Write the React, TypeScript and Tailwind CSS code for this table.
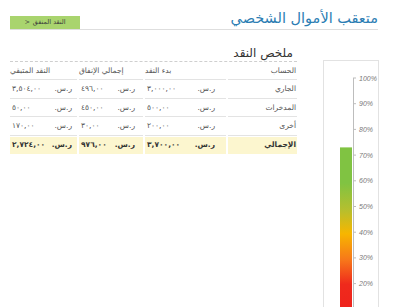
const rows = [
  { name: "الجاري", start: "٣,٠٠٠,٠٠", spent: "٤٩٦,٠٠", left: "٣,٥٠٤,٠٠" },
  { name: "المدخرات", start: "٥٠٠,٠٠", spent: "٤٥٠,٠٠", left: "٥٠,٠٠" },
  { name: "أخرى", start: "٢٠٠,٠٠", spent: "٣٠,٠٠", left: "١٧٠,٠٠" },
];

const total = { name: "الإجمالي", start: "٣,٧٠٠,٠٠", spent: "٩٧٦,٠٠", left: "٢,٧٢٤,٠٠" };

const ticks = [100, 90, 80, 70, 60, 50, 40, 30, 20];

function Money({ value, pad, bold }: { value: string; pad: string; bold?: boolean }) {
  return (
    <div className={`flex items-center justify-between pl-[2px] ${pad} ${bold ? "font-bold text-[#333]" : ""}`}>
      <span>{value}</span>
      <span dir="rtl">ر.س.</span>
    </div>
  );
}

function Gauge() {
  const zero = 274;
  const step = 25.7;
  const barTop = zero - 7.3 * step;
  return (
    <svg width="56" height="260" viewBox="0 0 56 260">
      <defs>
        <linearGradient id="fill" x1="0" y1={barTop} x2="0" y2={zero} gradientUnits="userSpaceOnUse">
          <stop offset="0" stopColor="#80c342" />
          <stop offset="0.19" stopColor="#80c342" />
          <stop offset="0.33" stopColor="#b4bf2f" />
          <stop offset="0.46" stopColor="#f7b600" />
          <stop offset="0.6" stopColor="#f7771a" />
          <stop offset="0.73" stopColor="#ef2a1c" />
          <stop offset="1" stopColor="#ee1c1c" />
        </linearGradient>
      </defs>
      <rect x="16" y={barTop} width="12" height={zero - barTop} fill="url(#fill)" />
      <line x1="29.5" y1="17" x2="29.5" y2="260" stroke="#bdbdbd" strokeWidth="1" />
      {ticks.map((t) => {
        const y = zero - (t / 10) * step;
        return (
          <g key={t}>
            <line x1="29" y1={y} x2="32" y2={y} stroke="#bdbdbd" strokeWidth="1" />
            <text
              x="35"
              y={y + 2.5}
              fontSize="7"
              fontStyle="italic"
              fill="#7a7a7a"
              fontFamily="'Liberation Sans', sans-serif"
            >
              {t}%
            </text>
          </g>
        );
      })}
    </svg>
  );
}

export default function App() {
  return (
    <div className="h-[307px] w-[400px] overflow-hidden bg-white pt-[10px] font-['DejaVu_Sans',sans-serif] text-[#555]">
      {/* header */}
      <div className="ml-[10px] flex h-[20px] w-[368px] items-end justify-between border-b border-[#dedede]">
        <div dir="ltr" className="flex h-[13px] w-[70px] items-center justify-center gap-[3px] bg-[#a9d46e] text-[6.5px] text-[#3c3c3c]">
          <span>&gt;</span>
          <span dir="rtl">النقد المنفق</span>
        </div>
        <h1 dir="rtl" className="pb-[1px] text-[14.5px] leading-[19px] text-[#2b7db3]">
          متعقب الأموال الشخصي
        </h1>
      </div>

      <div className="ml-[10px] mt-[16px] flex gap-[26px]">
        {/* summary */}
        <div className="w-[287px]">
          <h2
            dir="rtl"
            className="border-b border-dashed border-[#cfcfcf] pb-[1px] pr-[4px] text-[12px] leading-[14px] text-[#333]"
          >
            ملخص النقد
          </h2>
          <div className="grid grid-cols-[67px_64px_81px_69px] gap-x-[2px] text-[7.5px]">
            <div className="flex h-[18px] items-center border-b border-[#e3e3e3]" dir="rtl">
              <span className="mr-auto">النقد المتبقي</span>
            </div>
            <div className="flex h-[18px] items-center border-b border-[#e3e3e3]" dir="rtl">
              <span className="mr-auto">إجمالي الإنفاق</span>
            </div>
            <div className="flex h-[18px] items-center border-b border-[#e3e3e3]" dir="rtl">
              <span className="mr-auto">بدء النقد</span>
            </div>
            <div className="flex h-[18px] items-center border-b border-[#e3e3e3] pr-[1px]" dir="rtl">
              الحساب
            </div>

            {rows.map((r) => (
              <div key={r.name} className="contents">
                <div className="flex h-[18.5px] flex-col justify-center border-b border-[#e3e3e3]">
                  <Money value={r.left} pad="pr-[5px]" />
                </div>
                <div className="flex h-[18.5px] flex-col justify-center border-b border-[#e3e3e3]">
                  <Money value={r.spent} pad="pr-[8px]" />
                </div>
                <div className="flex h-[18.5px] flex-col justify-center border-b border-[#e3e3e3]">
                  <Money value={r.start} pad="pr-[11px]" />
                </div>
                <div dir="rtl" className="flex h-[18.5px] items-center border-b border-[#e3e3e3] pr-[1px]">
                  {r.name}
                </div>
              </div>
            ))}

            <div className="mt-[1px] flex h-[17px] flex-col justify-center bg-[#fcf6cf]">
              <Money value={total.left} pad="pr-[5px]" bold />
            </div>
            <div className="mt-[1px] flex h-[17px] flex-col justify-center bg-[#fcf6cf]">
              <Money value={total.spent} pad="pr-[8px]" bold />
            </div>
            <div className="mt-[1px] flex h-[17px] flex-col justify-center bg-[#fcf6cf]">
              <Money value={total.start} pad="pr-[11px]" bold />
            </div>
            <div dir="rtl" className="mt-[1px] flex h-[17px] items-center bg-[#fcf6cf] pr-[1px] font-bold text-[#333]">
              {total.name}
            </div>
          </div>
        </div>

        {/* gauge */}
        <div className="mt-[14px] h-[260px] w-[56px] border border-[#e2e2e2]">
          <Gauge />
        </div>
      </div>
    </div>
  );
}
